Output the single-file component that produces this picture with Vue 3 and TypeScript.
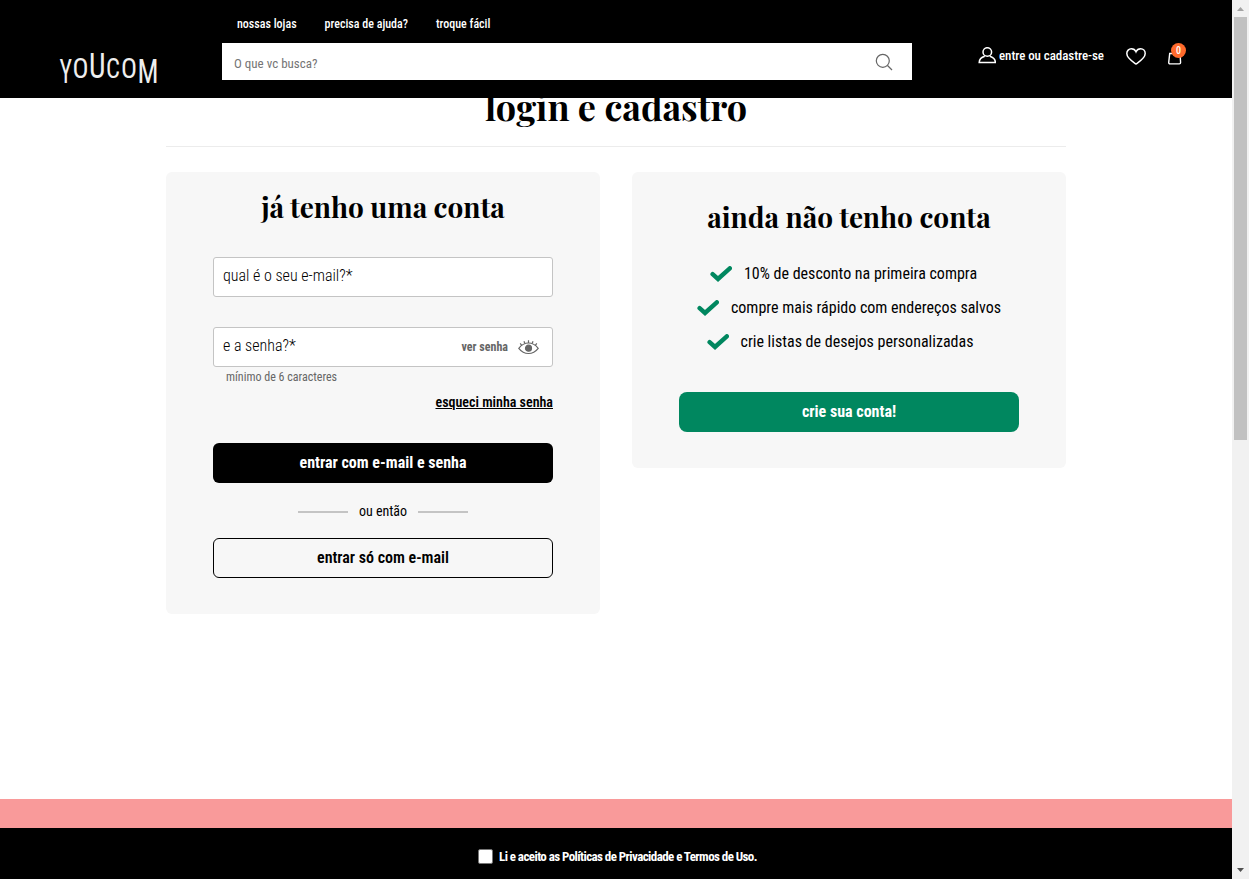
<script setup lang="ts">
const links = ['nossas lojas', 'precisa de ajuda?', 'troque fácil']
const benefits = [
  { label: '10% de desconto na primeira compra', shift: 11 },
  { label: 'compre mais rápido com endereços salvos', shift: 0 },
  { label: 'crie listas de desejos personalizadas', shift: 18 },
]
</script>

<template>
  <div class="window">
    <div class="page">
      <header class="header">
        <a class="logo" aria-label="youcom">
          <svg width="100" height="34" viewBox="0 0 100 34">
            <g class="logo-type">
              <text x="0.500" y="31" font-size="33" textLength="12.500" lengthAdjust="spacingAndGlyphs">Y</text>
              <text x="13.500" y="26" font-size="27" textLength="16" lengthAdjust="spacingAndGlyphs">O</text>
              <text x="30" y="26" font-size="35" textLength="16.500" lengthAdjust="spacingAndGlyphs">U</text>
              <text x="47" y="26" font-size="27" textLength="14" lengthAdjust="spacingAndGlyphs">C</text>
              <text x="62" y="26" font-size="27" textLength="16" lengthAdjust="spacingAndGlyphs">O</text>
              <text x="78.500" y="31" font-size="33" textLength="21" lengthAdjust="spacingAndGlyphs">M</text>
            </g>
          </svg>
        </a>
        <div class="middle">
          <nav class="nav">
            <a v-for="l in links" :key="l" class="t">{{ l }}</a>
          </nav>
          <div class="search">
            <span class="t">O que vc busca?</span>
            <svg width="18" height="18" viewBox="0 0 18 18" fill="none" stroke="#666" stroke-width="1.2">
              <circle cx="7.800" cy="7.800" r="6.500" /><path d="M12.500 12.500 17 17" />
            </svg>
          </div>
        </div>
        <div class="account">
          <svg class="user" width="18" height="17" viewBox="0 0 18 17" fill="none" stroke="#fff" stroke-width="1.500">
            <ellipse cx="9.300" cy="5" rx="4.300" ry="4.300" />
            <path d="M6.800 9.200C3.300 10.200 1.300 12 1.200 15.500h16.200C17.300 12 15.300 10.200 11.800 9.200" />
          </svg>
          <span class="t">entre ou cadastre-se</span>
          <svg class="heart" width="20" height="17" viewBox="0 0 20 17" fill="none" stroke="#fff" stroke-width="1.500">
            <path d="M10 16C6.500 13.600.8 10.300.8 5.600.8 2.700 2.900.8 5.300.8 7.500.8 9.200 2 10 3.800 10.800 2 12.500.8 14.700.8c2.400 0 4.500 1.900 4.500 4.800 0 4.700-5.700 8-9.200 10.400Z" />
          </svg>
          <span class="bag">
            <svg width="14" height="15" viewBox="0 0 14 15" fill="none" stroke="#fff" stroke-width="1.400">
              <path d="M1.700 3.500h10.300l.6 9q0 1.400-1.300 1.400H2q-1.300 0-1.300-1.400Z" />
            </svg>
            <b class="badge">0</b>
          </span>
        </div>
      </header>

      <main class="main">
        <h1 class="title">login e cadastro</h1>
        <div class="cards">
          <section class="card login">
            <h2>já tenho uma conta</h2>
            <div class="field email"><span class="t">qual é o seu e-mail?*</span></div>
            <div class="field password">
              <span class="t">e a senha?*</span>
              <span class="reveal">
                <b class="t">ver senha</b>
                <svg width="21" height="15" viewBox="0 0 21 15" fill="none" stroke="#666" stroke-width="1.200">
                  <path d="M.8 8.300C3.500 4.800 6.800 3 10.500 3s7 1.800 9.700 5.300C17.500 11.800 14.200 13.500 10.500 13.500S3.500 11.800.8 8.300Z" />
                  <path d="M10.500 3V.3M6.800 3.500 6 1.200M14.200 3.500 15 1.200M3.700 5.300 2.200 3.400M17.300 5.300 18.800 3.400" />
                  <circle cx="10.500" cy="8.200" r="3" fill="#666" />
                </svg>
              </span>
            </div>
            <p class="hint">mínimo de 6 caracteres</p>
            <a class="forgot">esqueci minha senha</a>
            <button class="btn black">entrar com e-mail e senha</button>
            <div class="or"><i></i><span class="t">ou então</span><i></i></div>
            <button class="btn outline">entrar só com e-mail</button>
          </section>
          <section class="card signup">
            <h2>ainda não tenho conta</h2>
            <ul>
              <li v-for="b in benefits" :key="b.label" :style="{ paddingRight: b.shift + 'px' }">
                <svg width="22" height="16" viewBox="0 0 22 16" fill="none" stroke="#00875f" stroke-width="4.400">
                  <path d="M2.600 8.200 8 13 19.800 2.300" stroke-linecap="round" />
                </svg>
                <span class="t">{{ b.label }}</span>
              </li>
            </ul>
            <button class="btn green">crie sua conta!</button>
          </section>
        </div>
      </main>

      <div class="strip"></div>
      <footer class="terms">
        <input type="checkbox" aria-label="aceito" />
        <span class="t">Li e aceito as Políticas de Privacidade e Termos de Uso.</span>
      </footer>
    </div>
    <div class="scrollbar">
      <svg width="17" height="17" viewBox="0 0 17 17"><path d="M8.500 7 12 11H5Z" fill="#a3a3a3" /></svg>
      <div class="thumb"></div>
      <svg class="down" width="17" height="17" viewBox="0 0 17 17"><path d="M5 6h7L8.500 10Z" fill="#505050" /></svg>
    </div>
  </div>
</template>

<style>
body { margin: 0; overflow: hidden; }
</style>
<style scoped>
* { box-sizing: border-box; }
.window { display: flex; width: 1249px; height: 879px; font: 400 13px/20px "Roboto Condensed", Roboto, sans-serif; font-stretch: 75%; color: #000; background: #fff; overflow: hidden; }
.page { width: 1232px; display: flex; flex-direction: column; }
.t { white-space: nowrap; flex: none; }
.header { position: relative; z-index: 1; flex: none; height: 98px; display: flex; background: #000; color: #fff; }
.logo { width: 222px; padding: 52px 0 0 59px; }
.logo svg { overflow: visible; }
.logo-type { fill: #eee; font-family: Roboto, sans-serif; font-weight: 400; font-stretch: 75%; }
.middle { width: 690px; padding-top: 14px; }
.nav { display: flex; gap: 28px; padding-left: 15px; height: 29px; font-size: 12px; font-weight: 500; }
.search { height: 37px; padding: 0 19px 0 12px; background: #fff; color: #757575; display: flex; align-items: center; justify-content: space-between; }
.search .t { padding-top: 5px; }
.account { display: flex; align-items: flex-start; padding: 46px 0 0 66px; font-weight: 500; }
.account .t { margin-left: 3px; width: 105px; letter-spacing: -0.07px; }
.user { margin-top: 1px; }
.heart { margin: 2px 0 0 22px; }
.bag { position: relative; margin: 4px 0 0 22px; height: 15px; }
.bag svg { display: block; }
.badge { position: absolute; left: 3px; top: -7px; width: 15px; height: 15px; border-radius: 50%; background: #ff6a2c; font: 500 10px/15px Roboto, sans-serif; font-stretch: 75%; text-align: center; }
.main { flex: 1; width: 900px; margin: 0 auto; }
h1, h2, p, ul { margin: 0; padding: 0; }
h1, h2 { font-family: "Playfair Display", "Liberation Serif", serif; font-weight: 700; text-align: center; }
.title { margin-top: -16px; height: 65px; border-bottom: 1px solid #ececec; font-size: 36px; line-height: 48px; }
h2 { height: 36px; font-size: 28px; line-height: 36px; }
.cards { display: flex; gap: 32px; align-items: flex-start; margin-top: 25px; }
.card { width: 434px; padding: 0 47px; background: #f7f7f7; border-radius: 6px; display: flex; flex-direction: column; }
.login { height: 442px; padding-top: 17px; }
.signup { height: 296px; padding-top: 27px; }
.field { height: 40px; border: 1px solid #c4c4c4; border-radius: 3px; background: #fff; padding: 0 13px 3px 9px; display: flex; align-items: center; justify-content: space-between; font-size: 16px; font-weight: 300; }
.email { margin: 32px 0 30px; }
.reveal { display: flex; align-items: center; gap: 10px; padding-top: 3px; color: #666; font-size: 12px; }
.reveal .t { font-weight: 700; }
.hint { height: 20px; padding-left: 13px; color: #666; font-size: 12px; }
.forgot { height: 20px; margin-top: 5px; align-self: flex-end; font-size: 14px; font-weight: 600; text-decoration: underline; }
.btn { height: 40px; width: 340px; padding: 0 0 1px; border: 0; border-radius: 6px; display: flex; align-items: center; justify-content: center; color: #fff; font: 700 16px/20px "Roboto Condensed", Roboto, sans-serif; font-stretch: 75%; }
.black { margin-top: 31px; background: #000; }
.outline { margin-top: 17px; border: 1px solid #000; background: transparent; color: #000; font-weight: 600; }
.green { background: #00875f; border-radius: 8px; margin-top: 33px; }
.or { display: flex; justify-content: center; align-items: center; gap: 11px; height: 20px; margin-top: 18px; font-size: 14px; }
.or i { width: 50px; height: 2px; margin-top: 2px; background: #c4c4c4; }
ul { list-style: none; margin-top: 22px; font-size: 16px; }
li { height: 34px; display: flex; align-items: center; justify-content: center; gap: 12px; }
.strip { flex: none; height: 29px; background: #f99a9a; }
.terms { flex: none; height: 51px; padding: 6px 0 0 3px; background: #000; color: #fff; display: flex; align-items: center; justify-content: center; gap: 6px; font-weight: 700; letter-spacing: -0.58px; }
.terms input { appearance: none; width: 15px; height: 15px; margin: 0; background: #fff; border: 1px solid #767676; border-radius: 2px; }
.scrollbar { width: 17px; background: #f1f1f1; display: flex; flex-direction: column; }
.scrollbar svg { flex: none; }
.thumb { width: 13px; height: 423px; margin: 0 2px; background: #c1c1c1; }
.down { margin-top: auto; }
</style>
